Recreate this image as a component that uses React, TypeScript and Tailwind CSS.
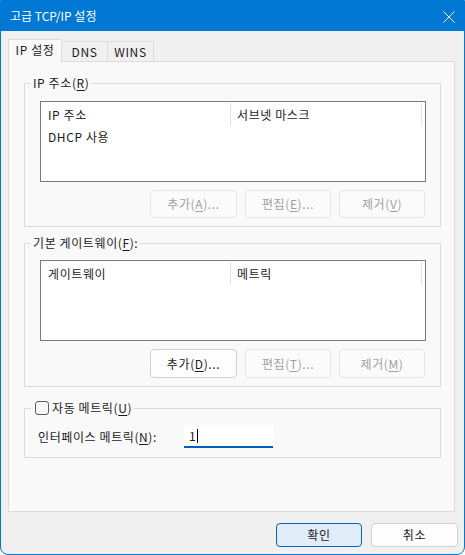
import React from "react";

const FONT = "font-['Noto_Sans_CJK_KR','Noto_Sans',sans-serif]";

function Key({ k }: { k: string }) {
    return <span className="underline underline-offset-[2px] decoration-1">{k}</span>;
}

function WinButton({ children, disabled, primary, className = "" }: { children: React.ReactNode; disabled?: boolean; primary?: boolean; className?: string }) {
    let look = "bg-[#fdfdfd] border-[#d0d0d0] text-[#1b1b1b]";
    if (disabled) look = "bg-[#fbfbfb] border-[#e5e5e5] text-[#9f9f9f]";
    if (primary) look = "bg-[#e0edf8] border-[#0067c0] text-[#1b1b1b]";
    return (
        <div className={`flex items-center justify-center border rounded-[4px] text-[12px] leading-none ${look} ${className}`}>
            {children}
        </div>
    );
}

function ListView({ cols, rows }: { cols: [string, string]; rows: string[] }) {
    return (
        <div className="w-[386px] h-[81px] border border-[#7a7a7a] bg-white text-[12px] text-[#1b1b1b]">
            <div className="flex h-[24px]">
                <div className="w-[190px] pl-[7px] mt-[1px] flex items-center border-r border-[#e3e3e3]">{cols[0]}</div>
                <div className="w-[191px] pl-[6px] mt-[1px] flex items-center border-r border-[#e3e3e3]">{cols[1]}</div>
            </div>
            {rows.map((r) => (
                <div key={r} className="h-[22px] pl-[7px] flex items-center">{r}</div>
            ))}
        </div>
    );
}

function Group({ legend, height, children, className = "" }: { legend: React.ReactNode; height: string; children: React.ReactNode; className?: string }) {
    return (
        <div className={`relative ml-[15px] w-[417px] border border-[#dcdcdc] ${height} ${className}`}>
            <div className="absolute left-[6px] top-[-9px] px-[2px] bg-[#f9f9f9] text-[12px] leading-[16px] text-[#1b1b1b] flex items-center">
                {legend}
            </div>
            {children}
        </div>
    );
}

export default function App() {
    return (
        <div className={`${FONT} w-[465px] h-[555px] flex flex-col bg-[#f0f0f0] border border-[#0078d4] rounded-b-[8px] overflow-hidden`}>
            {/* title bar */}
            <div className="h-[30px] bg-[#0078d4] flex items-center justify-between pl-[9px] pr-[9px] text-white text-[12px]">
                <span>고급 TCP/IP 설정</span>
                <svg width="12" height="12" viewBox="0 0 12 12" className="mt-[1px]">
                    <path d="M0.5 0.5 L11.5 11.5 M11.5 0.5 L0.5 11.5" stroke="white" strokeWidth="1" />
                </svg>
            </div>

            <div className="flex-1 pl-[7px] pt-[8px] tracking-[0.6px]">
                {/* tabs */}
                <div className="flex items-end h-[22px] text-[12px] text-[#1b1b1b]">
                    <div className="relative z-10 w-[54px] h-[23px] -mb-[1px] bg-[#f9f9f9] border border-b-0 border-[#dcdcdc] flex items-center justify-center pb-[2px]">
                        IP 설정
                    </div>
                    <div className="w-[46px] h-[20px] border border-l-0 border-b-0 border-[#dcdcdc] flex items-center justify-center">DNS</div>
                    <div className="w-[46px] h-[20px] border border-l-0 border-b-0 border-[#dcdcdc] flex items-center justify-center">WINS</div>
                </div>

                {/* tab panel */}
                <div className="w-[447px] h-[451px] border border-[#dcdcdc] bg-[#f9f9f9] pt-[21px]">
                    <Group legend={<span>IP 주소(<Key k="R" />)</span>} height="h-[144px]">
                        <div className="pl-[15px] pt-[17px]">
                            <ListView cols={["IP 주소", "서브넷 마스크"]} rows={["DHCP 사용"]} />
                            <div className="mt-[8px] w-[385px] flex justify-end gap-[8px]">
                                <WinButton disabled className="w-[87px] h-[28px]">추가(<Key k="A" />)...</WinButton>
                                <WinButton disabled className="w-[86px] h-[28px]">편집(<Key k="E" />)...</WinButton>
                                <WinButton disabled className="w-[86px] h-[28px]">제거(<Key k="V" />)</WinButton>
                            </div>
                        </div>
                    </Group>

                    <Group legend={<span>기본 게이트웨이(<Key k="F" />):</span>} height="h-[144px]" className="mt-[16px]">
                        <div className="pl-[15px] pt-[16px]">
                            <ListView cols={["게이트웨이", "메트릭"]} rows={[]} />
                            <div className="mt-[8px] w-[385px] flex justify-end gap-[8px]">
                                <WinButton className="w-[87px] h-[29px]">추가(<Key k="D" />)...</WinButton>
                                <WinButton disabled className="w-[86px] h-[29px]">편집(<Key k="T" />)...</WinButton>
                                <WinButton disabled className="w-[86px] h-[29px]">제거(<Key k="M" />)</WinButton>
                            </div>
                        </div>
                    </Group>

                    <Group
                        height="h-[50px]"
                        className="mt-[21px]"
                        legend={
                            <span className="flex items-center gap-[3px] ml-[2px]">
                                <span className="w-[14px] h-[14px] rounded-[3px] border border-[#5f5f5f] bg-[#f6f6f6]" />
                                <span>자동 메트릭(<Key k="U" />)</span>
                            </span>
                        }
                    >
                        <div className="flex items-center pl-[13px] pt-[16px] text-[12px] text-[#1b1b1b]">
                            <span className="w-[146px]">인터페이스 메트릭(<Key k="N" />):</span>
                            <div className="w-[89px] h-[23px] bg-white border-b-2 border-[#005fb8] flex items-center pl-[5px]">
                                <span>1</span>
                                <span className="ml-[1px] w-[1px] h-[14px] bg-black" />
                            </div>
                        </div>
                    </Group>
                </div>

                {/* footer */}
                <div className="mt-[11px] ml-[268px] flex gap-[9px]">
                    <WinButton primary className="w-[86px] h-[24px]">확인</WinButton>
                    <WinButton className="w-[87px] h-[24px]">취소</WinButton>
                </div>
            </div>
        </div>
    );
}
